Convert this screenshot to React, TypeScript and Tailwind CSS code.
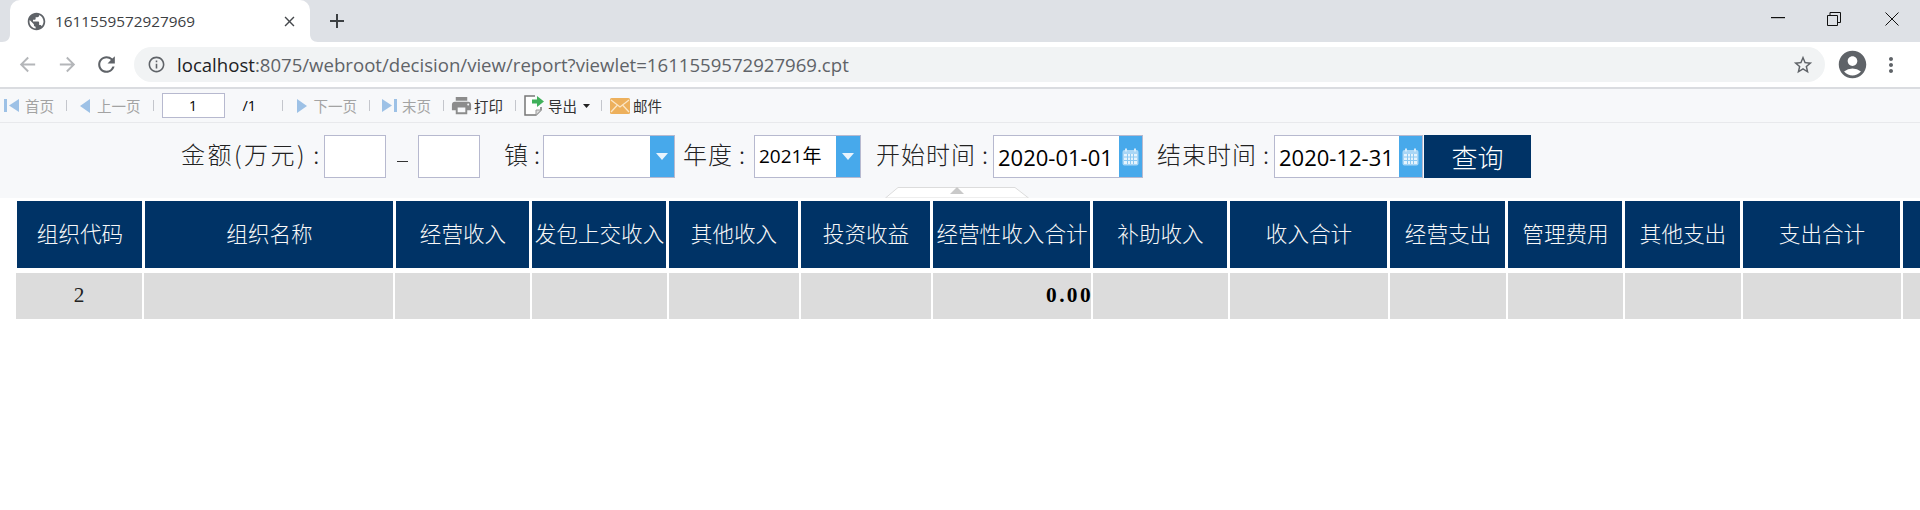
import {
  MdAccountCircle,
  MdAdd,
  MdArrowBack,
  MdArrowForward,
  MdClose,
  MdInfoOutline,
  MdMoreVert,
  MdPrint,
  MdPublic,
  MdRefresh,
  MdStarBorder,
} from 'react-icons/md'

const sans = "font-['Open_Sans','Noto_Sans_CJK_SC',sans-serif]"
const cjk = "font-['Noto_Sans_CJK_SC',sans-serif]"

const headers = [
  '组织代码',
  '组织名称',
  '经营收入',
  '发包上交收入',
  '其他收入',
  '投资收益',
  '经营性收入合计',
  '补助收入',
  '收入合计',
  '经营支出',
  '管理费用',
  '其他支出',
  '支出合计',
  '',
]

const rowCells = ['2', '', '', '', '', '', '0.00', '', '', '', '', '', '', '']

function TabFlare({ side }: { side: 'left' | 'right' }) {
  return (
    <svg width="8" height="8" viewBox="0 0 8 8" className="self-end">
      {side === 'right' ? <path d="M0 0 C0 5 3 8 8 8 L0 8 Z" fill="#fff" /> : <path d="M8 0 C8 5 5 8 0 8 L8 8 Z" fill="#fff" />}
    </svg>
  )
}

function Separator({ className }: { className: string }) {
  return <span className={`h-[11px] w-px bg-[#c4c6cc] ${className}`} />
}

function FirstIcon() {
  return (
    <svg width="16" height="15" viewBox="0 0 16 15">
      <rect x="0" y="1" width="3" height="13" fill="#9dc1e6" />
      <path d="M15 1 V14 L5 7.5 Z" fill="#9dc1e6" />
    </svg>
  )
}

function LastIcon() {
  return (
    <svg width="16" height="15" viewBox="0 0 16 15">
      <path d="M1 1 V14 L11 7.5 Z" fill="#9dc1e6" />
      <rect x="13" y="1" width="3" height="13" fill="#9dc1e6" />
    </svg>
  )
}

function Triangle({ dir }: { dir: 'left' | 'right' }) {
  return (
    <svg width="10" height="14" viewBox="0 0 10 14">
      <path d={dir === 'left' ? 'M10 0 V14 L0 7 Z' : 'M0 0 V14 L10 7 Z'} fill="#9dc1e6" />
    </svg>
  )
}

function ExportIcon() {
  return (
    <svg width="21" height="21" viewBox="0 0 21 21">
      <path d="M1 1 H11 V11 H17 V15 L12 20 H1 Z" fill="#fff" />
      <path d="M11 1 H1 V20 H12 L17 15 V12" fill="none" stroke="#777" strokeWidth="1.5" />
      <path d="M12 20 V15 H17" fill="#ddd" stroke="#999" />
      <path d="M8 4.5 H13 V1 L20 6.5 L13 12 V8.5 H8 Z" fill="#3fb05a" />
    </svg>
  )
}

function MailIcon() {
  return (
    <svg width="20" height="16" viewBox="0 0 20 16">
      <rect width="20" height="16" rx="1.5" fill="#edb05c" />
      <path d="M1 2 L10 9 L19 2 M1 14 L7 7.5 M19 14 L13 7.5" fill="none" stroke="#fbe6c6" strokeWidth="1.3" />
    </svg>
  )
}

function CalendarIcon() {
  return (
    <svg width="17" height="18" viewBox="0 0 17 18">
      <rect x="0.5" y="2" width="16" height="15.5" rx="2" fill="#a9d6f6" />
      <rect x="3" y="0.5" width="2" height="3" fill="#d5ecfb" />
      <rect x="12" y="0.5" width="2" height="3" fill="#d5ecfb" />
      <path d="M2 6 H15 V16 H2 Z" fill="#e6f4fd" />
      <path d="M2 9 H15 M2 12.5 H15 M5.5 6 V16 M8.5 6 V16 M11.5 6 V16" stroke="#8cc8f2" strokeWidth="1" />
    </svg>
  )
}

function DropButton() {
  return (
    <span className="flex h-full w-[24px] items-center justify-center bg-[#47a9eb]">
      <svg width="12" height="7" viewBox="0 0 12 7">
        <path d="M0 0 H12 L6 7 Z" fill="#e8f4fd" />
      </svg>
    </span>
  )
}

function Label({ text, className }: { text: string; className: string }) {
  return (
    <span className={`-mt-[5px] flex items-center whitespace-nowrap text-[24px] leading-none font-light text-[#222] ${cjk} ${className}`}>
      {text}
      <span className="ml-[6px]">:</span>
    </span>
  )
}

function DateField({ value, className }: { value: string; className: string }) {
  return (
    <div className={`flex h-[43px] items-center border border-[#b7b9cf] bg-white ${className}`}>
      <span className={`flex-1 pl-[4px] text-[22px] leading-none whitespace-nowrap text-black ${sans}`}>{value}</span>
      <span className="flex h-full w-[23px] items-center justify-center bg-[#47a9eb]">
        <CalendarIcon />
      </span>
    </div>
  )
}

export default function App() {
  return (
    <div className="h-[510px] w-[1920px] overflow-hidden bg-white">
      {/* Browser tabs */}
      <div className="flex h-[42px] bg-[#dee1e6] pl-[2px]">
        <TabFlare side="left" />
        <div className={`mt-0 flex h-[42px] w-[300px] items-center rounded-t-[10px] bg-white pl-[16px] ${sans}`}>
          <MdPublic size={21} className="text-[#5f6368]" />
          <span className="ml-[8px] text-[15.3px] text-[#3c4043]">1611559572927969</span>
          <MdClose size={17} className="ml-[86px] text-[#45484c]" />
        </div>
        <TabFlare side="right" />
        <MdAdd size={24} className="mt-[9px] ml-[7px] text-[#3c4043]" />
        <div className="ml-auto flex items-start">
          <svg width="14" height="2" viewBox="0 0 14 2" className="mt-[17px]">
            <rect width="14" height="1.2" fill="#111" />
          </svg>
          <svg width="14" height="14" viewBox="0 0 14 14" className="mt-[12px] ml-[42px]">
            <path d="M0.5 3.5 H10.5 V13.5 H0.5 Z M3 3.5 V0.5 H13.5 V10.5 H10.5" fill="none" stroke="#111" />
          </svg>
          <WindowClose />
        </div>
      </div>

      {/* Address bar */}
      <div className="flex h-[45px] items-center bg-white">
        <MdArrowBack size={23} className="ml-[16px] text-[#b4b6b9]" />
        <MdArrowForward size={23} className="ml-[17px] text-[#b4b6b9]" />
        <MdRefresh size={25} className="ml-[15px] text-[#5f6368]" />
        <div className={`ml-[15px] flex h-[35px] w-[1691px] items-center rounded-full bg-[#f1f3f4] ${sans}`}>
          <MdInfoOutline size={19} className="ml-[13px] text-[#5f6368]" />
          <span className="ml-[11px] text-[18.6px] whitespace-nowrap text-[#5f6368]">
            <span className="text-[#202124]">localhost</span>:8075/webroot/decision/view/report?viewlet=1611559572927969.cpt
          </span>
          <MdStarBorder size={22} className="mr-[11px] ml-auto text-[#5f6368]" />
        </div>
        <MdAccountCircle size={33} className="ml-[11px] text-[#5f6368]" />
        <MdMoreVert size={24} className="ml-[10px] text-[#5f6368]" />
      </div>
      <div className="h-[2px] bg-[#dadce0]" />

      {/* Report toolbar */}
      <div className={`flex h-[34px] items-center border-b border-[#e8e9ec] bg-[#f7f8fa] pl-[4px] text-[14.5px] text-[#a3a3a3] ${cjk}`}>
        <FirstIcon />
        <span className="ml-[5px]">首页</span>
        <Separator className="ml-[12px]" />
        <span className="ml-[13px] flex">
          <Triangle dir="left" />
        </span>
        <span className="ml-[7px]">上一页</span>
        <Separator className="ml-[12px]" />
        <span className={`ml-[8px] flex h-[25px] w-[63px] items-center justify-center border border-[#b7b9cf] bg-white text-[14px] text-black ${sans}`}>1</span>
        <span className={`ml-[18px] w-[39px] text-black ${sans}`}>/1</span>
        <Separator className="" />
        <span className="ml-[14px] flex">
          <Triangle dir="right" />
        </span>
        <span className="ml-[7px]">下一页</span>
        <Separator className="ml-[12px]" />
        <span className="ml-[11px] flex">
          <LastIcon />
        </span>
        <span className="ml-[5px]">末页</span>
        <Separator className="ml-[12px]" />
        <MdPrint size={23} className="ml-[6px] text-[#8c8c8c]" />
        <span className="ml-[1px] text-[#333]">打印</span>
        <Separator className="ml-[12px]" />
        <span className="ml-[8px] flex">
          <ExportIcon />
        </span>
        <span className="ml-[3px] text-[#333]">导出</span>
        <svg width="7" height="4" viewBox="0 0 7 4" className="ml-[6px]">
          <path d="M0 0 H7 L3.5 4 Z" fill="#222" />
        </svg>
        <Separator className="ml-[11px]" />
        <span className="ml-[8px] flex">
          <MailIcon />
        </span>
        <span className="ml-[3px] text-[#333]">邮件</span>
      </div>

      {/* Query form */}
      <div className="relative flex h-[75px] items-start bg-[#f7f8fa] pt-[12px] pl-[181px]">
        <div className="flex h-[43px] items-center">
          <Label text="金额(万元)" className="w-[143px] tracking-[2.5px]" />
          <span className="h-[43px] w-[62px] border border-[#b7b9cf] bg-white" />
          <span className="mt-[10px] ml-[11px] h-px w-[11px] bg-[#333]" />
          <span className="ml-[10px] h-[43px] w-[62px] border border-[#b7b9cf] bg-white" />
          <Label text="镇" className="ml-[24px] w-[39px]" />
          <div className="flex h-[43px] w-[132px] justify-end border border-[#b7b9cf] bg-white">
            <DropButton />
          </div>
          <Label text="年度" className="ml-[8px] w-[71px] tracking-[1px]" />
          <div className="flex h-[43px] w-[107px] items-center border border-[#b7b9cf] bg-white">
            <span className={`flex-1 pl-[4px] text-[19px] text-black ${sans}`}>2021年</span>
            <DropButton />
          </div>
          <Label text="开始时间" className="ml-[15px] w-[117px] tracking-[1px]" />
          <DateField value="2020-01-01" className="w-[150px]" />
          <Label text="结束时间" className="ml-[14px] w-[117px] tracking-[1px]" />
          <DateField value="2020-12-31" className="w-[149px]" />
          <span className={`ml-px flex h-[43px] w-[107px] items-center justify-center bg-[#003366] text-[26px] font-light text-white ${cjk}`}>查询</span>
        </div>
        <svg width="144" height="11" viewBox="0 0 144 11" className="absolute top-[64px] left-[885px]">
          <path d="M0.5 11 L13 0.5 H130 L143.5 11 Z" fill="#fff" stroke="#dcdcdc" />
          <path d="M72 0 L79 7 H65 Z" fill="#c9c9c9" />
        </svg>
      </div>

      {/* Report table */}
      <div className="pt-[3px]">
        <div className={`ml-[17px] grid h-[67px] w-[1903px] grid-cols-[125px_248px_133px_134px_129px_129px_157px_134px_157px_115px_114px_115px_157px_17px] gap-x-[3px] ${cjk}`}>
          {headers.map((h, i) => (
            <div key={i} className="flex items-center justify-center overflow-hidden bg-[#003366] pb-[2px] pl-[1px] text-[21.6px] font-light whitespace-nowrap text-[#f8f8f8]">
              {h}
            </div>
          ))}
        </div>
        <div className="mt-[5px] ml-[16px] grid h-[46px] w-[1904px] grid-cols-[126px_249px_135px_135px_130px_130px_158px_135px_158px_116px_115px_116px_158px_17px] gap-x-[2px] font-['Liberation_Serif',serif]">
          {rowCells.map((c, i) => (
            <div
              key={i}
              className={
                c === '0.00'
                  ? 'flex items-center justify-end bg-[#dcdcdc] text-[21.33px] font-bold text-black'
                  : 'flex items-center justify-center bg-[#dcdcdc] text-[21.33px] text-[#222]'
              }
            >
              {c === '0.00' ? <span className="-mr-[2px] tracking-[2.4px]">{c}</span> : c}
            </div>
          ))}
        </div>
      </div>
    </div>
  )
}

function WindowClose() {
  return (
    <svg width="14" height="14" viewBox="0 0 14 14" className="mt-[12px] mr-[21px] ml-[44px]">
      <path d="M0.5 0.5 L13.5 13.5 M13.5 0.5 L0.5 13.5" stroke="#111" fill="none" />
    </svg>
  )
}
